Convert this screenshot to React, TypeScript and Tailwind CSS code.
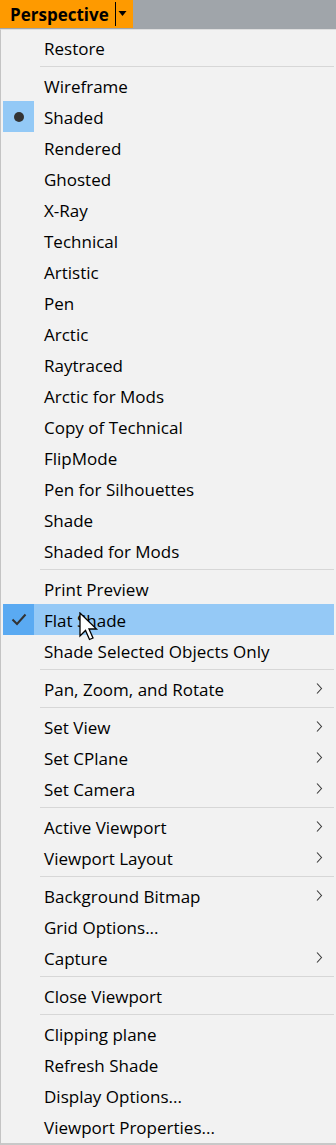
import React from "react";

type Item =
  | { kind: "sep" }
  | { kind: "item"; label: string; sub?: boolean; mark?: "dot" | "check"; hover?: boolean };

const sep: Item = { kind: "sep" };
const it = (label: string, extra: Partial<Extract<Item, { kind: "item" }>> = {}): Item => ({
  kind: "item",
  label,
  ...extra,
});

const items: Item[] = [
  it("Restore"),
  sep,
  it("Wireframe"),
  it("Shaded", { mark: "dot" }),
  it("Rendered"),
  it("Ghosted"),
  it("X-Ray"),
  it("Technical"),
  it("Artistic"),
  it("Pen"),
  it("Arctic"),
  it("Raytraced"),
  it("Arctic for Mods"),
  it("Copy of Technical"),
  it("FlipMode"),
  it("Pen for Silhouettes"),
  it("Shade"),
  it("Shaded for Mods"),
  sep,
  it("Print Preview"),
  it("Flat Shade", { mark: "check", hover: true }),
  it("Shade Selected Objects Only"),
  sep,
  it("Pan, Zoom, and Rotate", { sub: true }),
  sep,
  it("Set View", { sub: true }),
  it("Set CPlane", { sub: true }),
  it("Set Camera", { sub: true }),
  sep,
  it("Active Viewport", { sub: true }),
  it("Viewport Layout", { sub: true }),
  sep,
  it("Background Bitmap", { sub: true }),
  it("Grid Options..."),
  it("Capture", { sub: true }),
  sep,
  it("Close Viewport"),
  sep,
  it("Clipping plane"),
  it("Refresh Shade"),
  it("Display Options..."),
  it("Viewport Properties..."),
];

function Chevron() {
  return (
    <svg width="7" height="11" viewBox="0 0 7 11" className="mr-[11px]">
      <path d="M1 0.5 L5.5 5.5 L1 10.5" fill="none" stroke="#3a3a3a" strokeWidth="1.1" />
    </svg>
  );
}

function Cursor() {
  return (
    <svg
      width="20"
      height="30"
      viewBox="0 0 20 30"
      className="absolute left-[76px] top-[8px] pointer-events-none"
    >
      <path
        d="M1 1 L1 24 L6.5 18.5 L10.5 27.5 L14 26 L10 17 L17.5 17 Z"
        fill="#fff"
        stroke="#000"
        strokeWidth="1.3"
        strokeLinejoin="miter"
      />
    </svg>
  );
}

function MenuRow({ item }: { item: Extract<Item, { kind: "item" }> }) {
  const boxBg = item.hover ? "bg-[#5aaaf2]" : item.mark ? "bg-[#93c9f6]" : "";
  return (
    <div className={`relative flex items-center h-[31px] ${item.hover ? "bg-[#95c9f6]" : ""}`}>
      <div className={`w-[31px] h-[31px] flex items-center justify-center shrink-0 ${boxBg}`}>
        {item.mark === "dot" && <span className="block w-[10px] h-[10px] rounded-full bg-[#333333]" />}
        {item.mark === "check" && (
          <svg width="16" height="13" viewBox="0 0 16 13">
            <path d="M1.5 6.5 L6 11 L14.5 1.5" fill="none" stroke="#333333" strokeWidth="2" />
          </svg>
        )}
      </div>
      <span className="ml-[10px] pt-[2px] flex-1 text-[17px] text-black leading-none whitespace-nowrap">
        {item.label}
      </span>
      {item.sub && <Chevron />}
      {item.hover && <Cursor />}
    </div>
  );
}

export default function App() {
  return (
    <div
      className="w-[336px] h-[1145px] overflow-hidden bg-[#f0f0f0]"
      style={{ fontFamily: '"Open Sans", "Noto Sans", sans-serif' }}
    >
      {/* Viewport title bar */}
      <div className="h-[29px] bg-[#a0a5aa] flex">
        <div className="w-[133px] h-[28px] bg-[#fe9a00] flex items-center">
          <span className="ml-[10px] pt-[1px] text-[17px] font-bold text-black leading-none">Perspective</span>
          <span className="ml-auto w-px h-[24px] bg-black" />
          <svg width="16" height="8" viewBox="0 0 16 8" className="mr-[1px]">
            <path d="M2.5 1 L10.5 1 L6.5 6 Z" fill="#000" />
          </svg>
        </div>
      </div>

      {/* Popup menu */}
      <div className="h-[1116px] border-l border-l-[#c4c4c4] border-t border-t-[#dedede] border-b-2 border-b-[#c8c8c8] pt-[2px] pl-[2px] pr-[2px] bg-[#f2f2f2]">
        {items.map((item, i) =>
          item.kind === "sep" ? (
            <div key={i} className="h-[7px] flex items-center pl-[37px]">
              <div className="h-px w-full bg-[#d7d7d7]" />
            </div>
          ) : (
            <MenuRow key={i} item={item} />
          )
        )}
      </div>
    </div>
  );
}
